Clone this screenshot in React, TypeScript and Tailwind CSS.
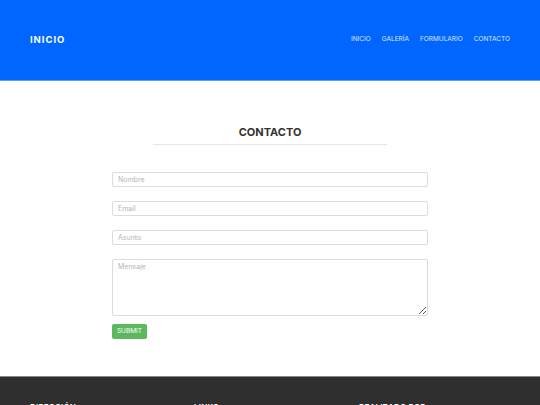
import React from 'react';

const NAV = ['INICIO', 'GALERÍA', 'FORMULARIO', 'CONTACTO'];

const font = { fontFamily: 'Inter, "Open Sans", sans-serif' };

const fieldCls =
  'h-[15px] border border-[#dcdcdc] rounded-[2px] px-[5px] text-[7px] text-[#555] placeholder-[#b5b5b5] outline-none';

const App: React.FC = () => {
  return (
    <div className="min-h-screen bg-white" style={font}>
      {/* Header */}
      <header className="h-[81px] bg-[#0066ff] border-b border-[#5c9bf7] flex items-center justify-between px-[30px]">
        <a className="text-white font-bold text-[9.5px] tracking-[0.1em]">INICIO</a>
        <nav className="flex items-center gap-[11px]">
          {NAV.map((n) => (
            <a key={n} className="text-[6.5px] text-[#dce8ff]">
              {n}
            </a>
          ))}
        </nav>
      </header>

      {/* Contact form */}
      <section className="h-[295px] pt-[44px]">
        <h2 className="text-center text-[11px] font-bold text-[#333] leading-[15px]">CONTACTO</h2>
        <div className="mx-auto mt-[4px] w-[234px] h-px bg-[#e6e6e6]" />

        <form className="mx-auto mt-[27px] w-[316px] flex flex-col">
          <input placeholder="Nombre" className={fieldCls} />
          <input placeholder="Email" className={`mt-[14px] ${fieldCls}`} />
          <input placeholder="Asunto" className={`mt-[14px] ${fieldCls}`} />
          <textarea
            placeholder="Mensaje"
            className="mt-[14px] h-[57px] border border-[#dcdcdc] rounded-[2px] px-[5px] py-[2px] text-[7px] text-[#555] placeholder-[#b5b5b5] outline-none"
          />
          <div className="mt-[8px]">
            <button
              type="button"
              className="h-[15px] w-[35px] bg-[#5cb85c] rounded-[2px] text-white text-[6.5px] flex items-center justify-center"
            >
              SUBMIT
            </button>
          </div>
        </form>
      </section>

      {/* Footer */}
      <footer className="bg-[#2f2f2f] border-t border-[#888] pt-[24px] pb-[30px] pl-[30px] grid grid-cols-[164px_165px_1fr]">
        <h3 className="text-white text-[8px] font-semibold tracking-wide">DIRECCIÓN</h3>
        <h3 className="text-white text-[8px] font-semibold tracking-wide">LINKS</h3>
        <h3 className="text-white text-[8px] font-semibold tracking-wide">REALIZADO POR</h3>
      </footer>
    </div>
  );
};

export default App;
